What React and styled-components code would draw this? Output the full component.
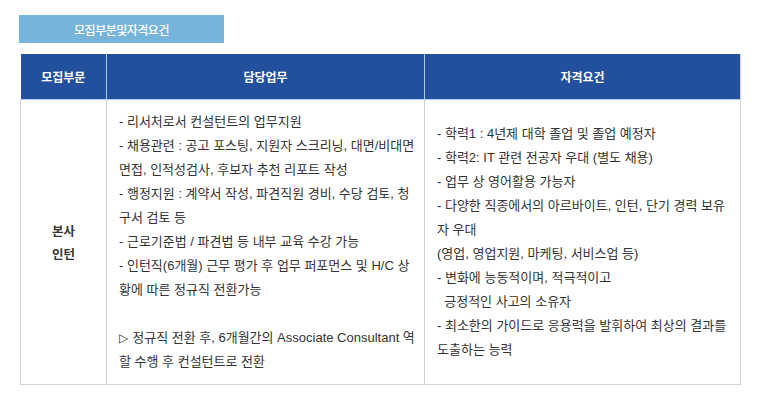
import React from "react";
import styled, { createGlobalStyle } from "styled-components";

const Global = createGlobalStyle`
  html, body { margin: 0; padding: 0; background: #fff; }
  body { font-family: "Liberation Sans", "Noto Sans CJK KR", sans-serif; color: #333; }
`;

const Page = styled.div`
  padding: 15px 0 0 19px;
`;

const TitleBox = styled.div`
  width: 205px;
  height: 28px;
  background: #76b4dc;
  color: #fff;
  display: flex;
  align-items: center;
  justify-content: center;
  font-family: "Noto Sans CJK KR", sans-serif;
  font-size: 12px;
  font-weight: 500;
  letter-spacing: -0.5px;
  margin-bottom: 11px;
`;

const Table = styled.table`
  border-collapse: collapse;
  table-layout: fixed;
  width: 720px;
  margin-left: 1px;
`;

const Th = styled.th`
  height: 45px;
  padding: 0;
  background: #22509c;
  color: #fff;
  font-family: "Noto Sans CJK KR", sans-serif;
  font-size: 12px;
  font-weight: 700;
  border-right: 1px solid ${(p) => (p.$last ? "#c8d6ea" : "#a9c6ec")};
  border-bottom: 1px solid #b3cceb;
`;

const Td = styled.td`
  border: 1px solid #d2d2d2;
  border-top: none;
  vertical-align: middle;
  padding: ${(p) => (p.$center ? "0" : "10px 12px")};
  text-align: ${(p) => (p.$center ? "center" : "left")};
  font-size: 13px;
  line-height: 24px;
  height: 264px;
  color: #333;
`;

const Division = styled.div`
  font-family: "Noto Sans CJK KR", sans-serif;
  font-weight: 700;
  font-size: 12.5px;
  line-height: 23px;
  color: #333;
`;

const Line = styled.div`
  white-space: pre;
  height: 24px;
`;

const Arrow = styled.span`
  font-family: "DejaVu Sans", sans-serif;
  font-size: 12px;
  margin-right: 4px;
`;

const duties = [
  "- 리서처로서 컨설턴트의 업무지원",
  "- 채용관련 : 공고 포스팅, 지원자 스크리닝, 대면/비대면",
  "면접, 인적성검사, 후보자 추천 리포트 작성",
  "- 행정지원 : 계약서 작성, 파견직원 경비, 수당 검토, 청",
  "구서 검토 등",
  "- 근로기준법 / 파견법 등 내부 교육 수강 가능",
  "- 인턴직(6개월) 근무 평가 후 업무 퍼포먼스 및 H/C 상",
  "황에 따른 정규직 전환가능",
  "",
  { arrow: true, text: "정규직 전환 후, 6개월간의 Associate Consultant 역" },
  "할 수행 후 컨설턴트로 전환",
];

const reqs = [
  "- 학력1 : 4년제 대학 졸업 및 졸업 예정자",
  "- 학력2: IT 관련 전공자 우대 (별도 채용)",
  "- 업무 상 영어활용 가능자",
  "- 다양한 직종에서의 아르바이트, 인턴, 단기 경력 보유",
  "자 우대",
  "(영업, 영업지원, 마케팅, 서비스업 등)",
  "- 변화에 능동적이며, 적극적이고",
  "  긍정적인 사고의 소유자",
  "- 최소한의 가이드로 응용력을 발휘하여 최상의 결과를",
  "도출하는 능력",
];

export default function App() {
  return (
    <>
      <Global />
      <Page>
        <TitleBox>모집부분및자격요건</TitleBox>
        <Table>
          <colgroup>
            <col style={{ width: 86 }} />
            <col style={{ width: 318 }} />
            <col style={{ width: 316 }} />
          </colgroup>
          <thead>
            <tr>
              <Th>모집부문</Th>
              <Th>담당업무</Th>
              <Th $last>자격요건</Th>
            </tr>
          </thead>
          <tbody>
            <tr>
              <Td $center>
                <Division>본사</Division>
                <Division>인턴</Division>
              </Td>
              <Td>
                {duties.map((l, i) =>
                  typeof l === "string" ? (
                    <Line key={i}>{l}</Line>
                  ) : (
                    <Line key={i}>
                      <Arrow>▷</Arrow>
                      {l.text}
                    </Line>
                  )
                )}
              </Td>
              <Td>
                {reqs.map((l, i) => (
                  <Line key={i}>{l}</Line>
                ))}
              </Td>
            </tr>
          </tbody>
        </Table>
      </Page>
    </>
  );
}
